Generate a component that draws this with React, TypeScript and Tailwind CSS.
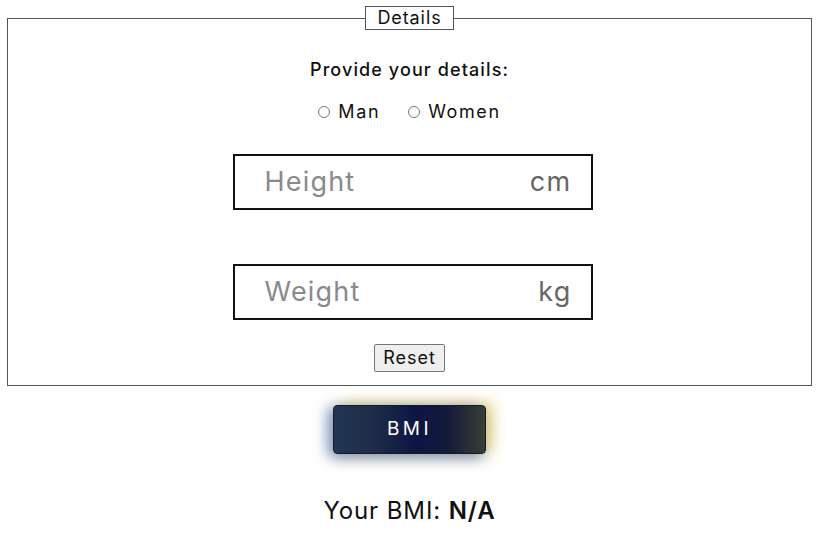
import { useState } from 'react'

const font = { fontFamily: 'Inter, "Noto Sans", sans-serif' }

const UnitInput = ({ placeholder, unit }: { placeholder: string, unit: string }) => {
  return (
    <div className="w-[360px] h-[56px] flex items-center justify-between border-2 border-[#111] pl-[30px] pr-[19px]">
      <input
        type="text"
        placeholder={placeholder}
        className="w-[200px] outline-none bg-transparent text-[27px] tracking-[1.2px] text-[#333] placeholder:text-[#8a8a8a]"
      />
      <span className="text-[27px] tracking-[1.3px] text-[#666]">{unit}</span>
    </div>
  )
}

const App = () => {
  const [sex, setSex] = useState('')

  return (
    <div className="w-[819px] h-[534px] bg-white text-[#111] px-[7px] pt-[6px]" style={font}>
      <fieldset className="h-[380px] border border-[#555] flex flex-col items-center px-0">
        <legend className="mx-auto h-[24px] border border-[#555] px-[11px] text-[18px] leading-[22px] tracking-[0.9px]">Details</legend>

        <p className="mt-[29px] text-[18px] font-medium leading-[22px] tracking-[1.1px]">Provide your details:</p>

        <div className="mt-[20px] flex items-center gap-[28px] text-[18px] leading-[22px] tracking-[1.6px]">
          <label className="flex items-center gap-[8px]">
            <input type="radio" name="sex" checked={sex === 'man'} onChange={() => setSex('man')} className="w-[12px] h-[12px] m-0" />
            Man
          </label>
          <label className="flex items-center gap-[8px]">
            <input type="radio" name="sex" checked={sex === 'women'} onChange={() => setSex('women')} className="w-[12px] h-[12px] m-0" />
            Women
          </label>
        </div>

        <div className="mt-[31px] ml-[6px] flex flex-col gap-[54px]">
          <UnitInput placeholder="Height" unit="cm" />
          <UnitInput placeholder="Weight" unit="kg" />
        </div>

        <button className="mt-[24px] h-[28px] px-[8px] text-[18px] leading-[22px] tracking-[1px] bg-[#efefef] border border-[#767676] rounded-[2px]">Reset</button>
      </fieldset>

      <div className="flex justify-center mt-[19px]">
        <button className="w-[153px] h-[49px] rounded-[4px] border border-[#141a2e] text-white text-[19px] tracking-[3.5px] bg-[linear-gradient(90deg,#223652_0%,#1f2d48_25%,#0d1544_55%,#141a3a_75%,#383f35_100%)] shadow-[-6px_2px_14px_rgba(60,90,150,0.55),8px_-3px_14px_rgba(225,195,70,0.55),0_6px_14px_rgba(110,120,150,0.35)]">
          BMI
        </button>
      </div>

      <p className="mt-[42px] text-center text-[24px] leading-[30px] tracking-[0.9px]">
        Your BMI: <span className="font-semibold">N/A</span>
      </p>
    </div>
  )
}

export default App
